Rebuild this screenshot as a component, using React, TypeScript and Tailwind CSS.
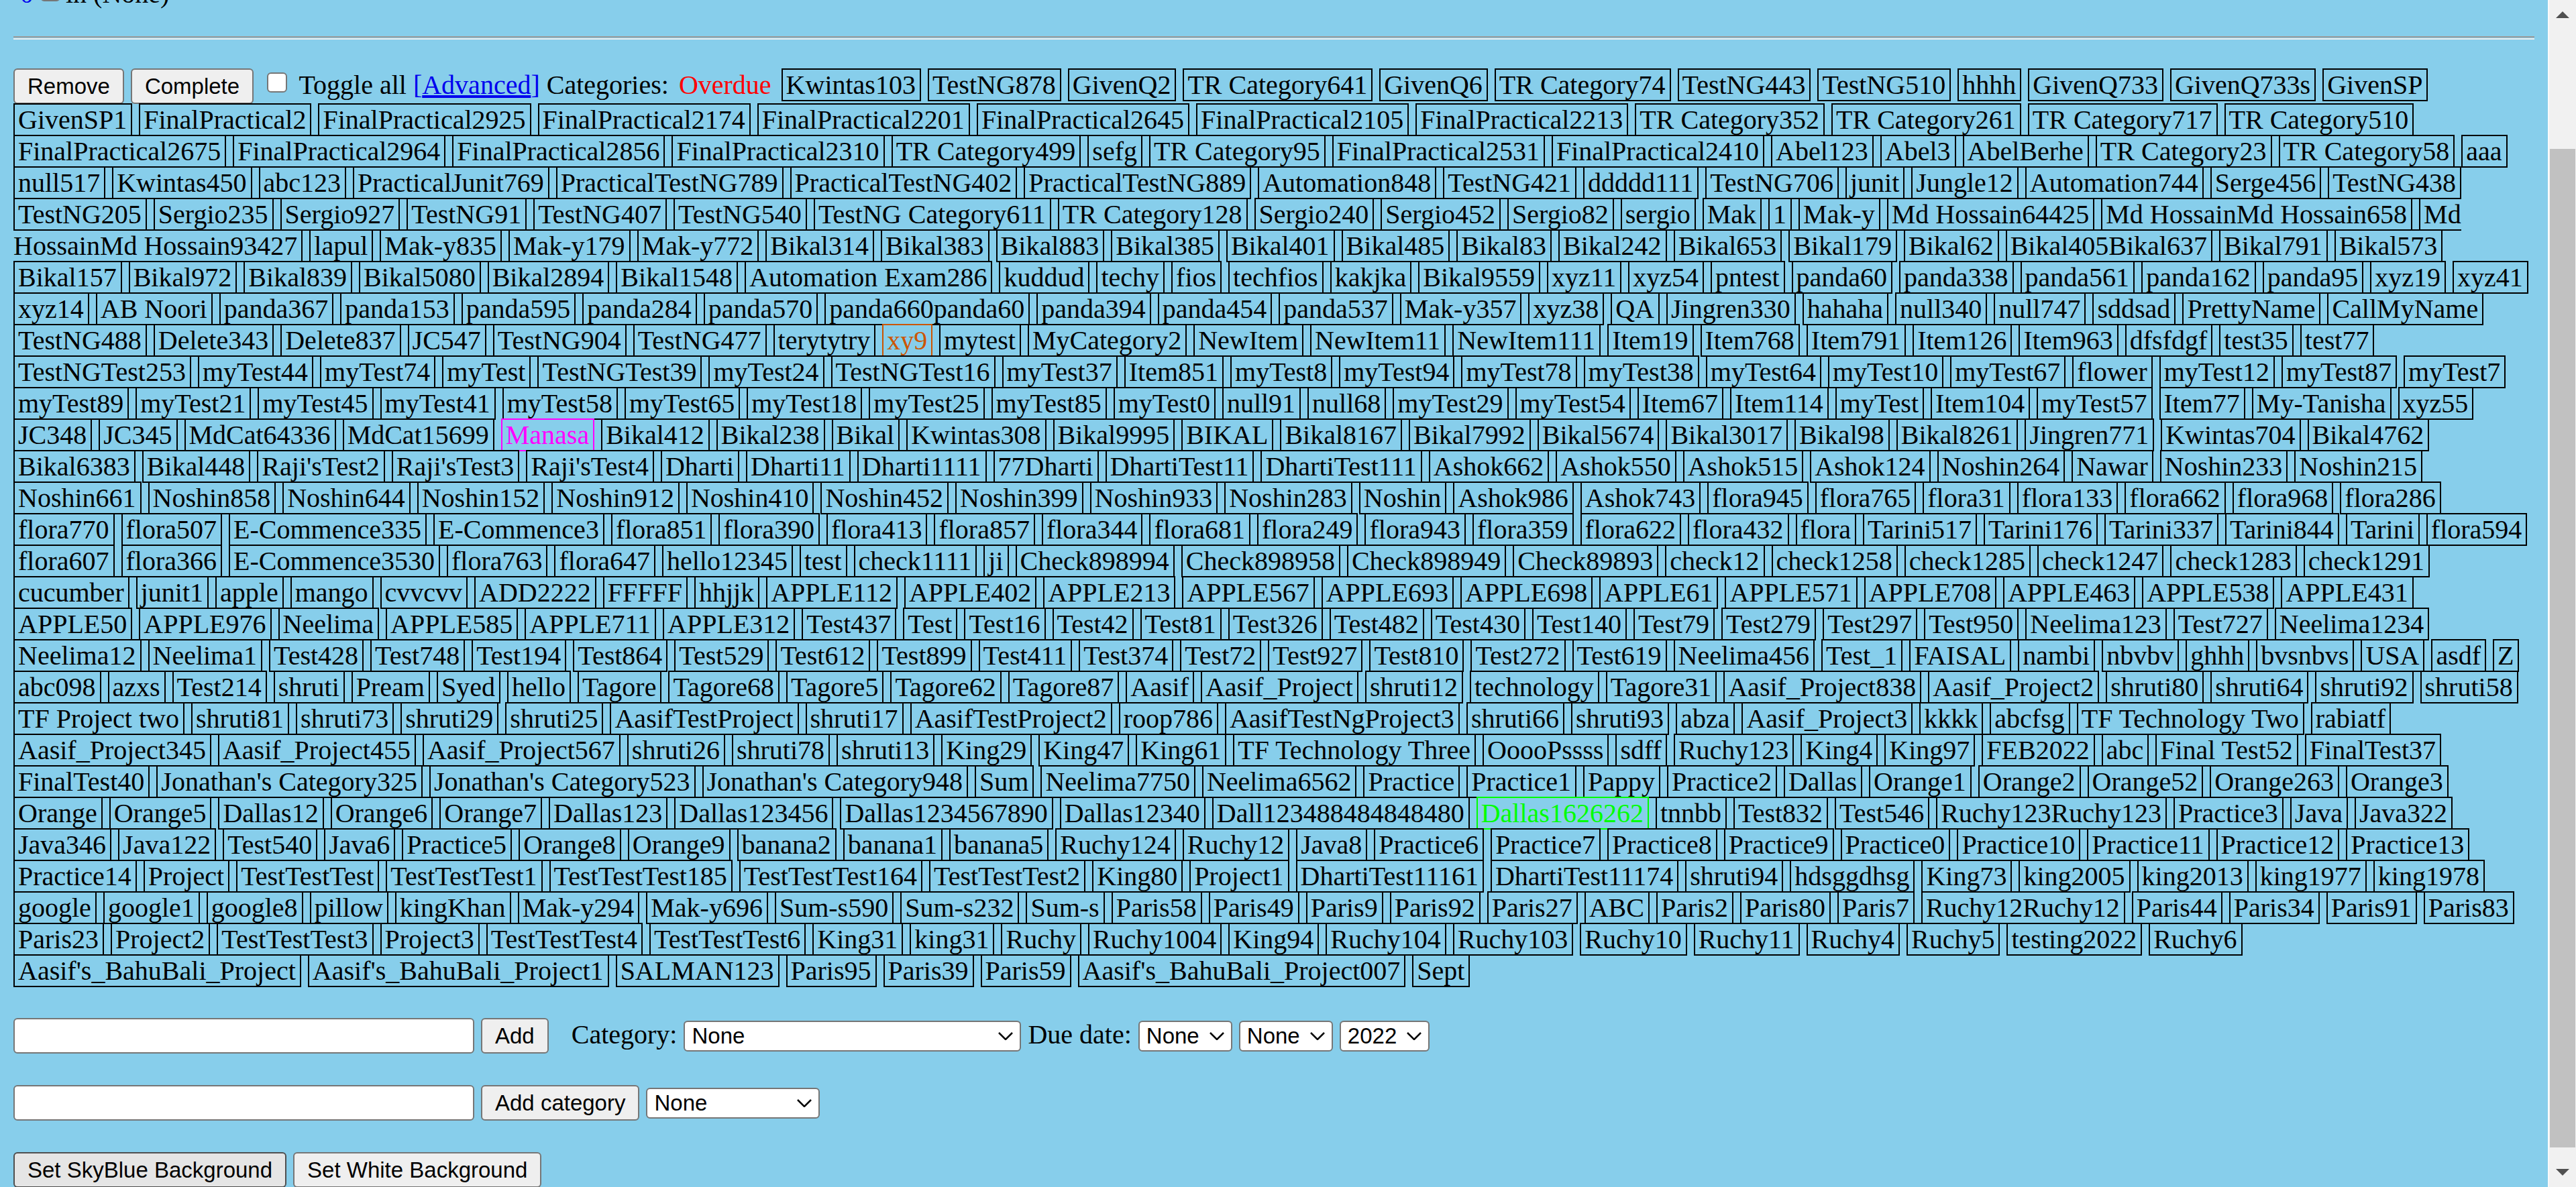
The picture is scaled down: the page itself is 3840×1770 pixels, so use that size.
import type { ReactNode } from "react";

const NAMES = `Kwintas103|TestNG878|GivenQ2|TR Category641|GivenQ6|TR Category74|TestNG443|TestNG510|hhhh|GivenQ733|GivenQ733s|GivenSP
GivenSP1|FinalPractical2|FinalPractical2925|FinalPractical2174|FinalPractical2201|FinalPractical2645|FinalPractical2105|FinalPractical2213|TR Category352|TR Category261|TR Category717|TR Category510
FinalPractical2675|FinalPractical2964|FinalPractical2856|FinalPractical2310|TR Category499|sefg|TR Category95|FinalPractical2531|FinalPractical2410|Abel123|Abel3|AbelBerhe|TR Category23|TR Category58|aaa
null517|Kwintas450|abc123|PracticalJunit769|PracticalTestNG789|PracticalTestNG402|PracticalTestNG889|Automation848|TestNG421|ddddd111|TestNG706|junit|Jungle12|Automation744|Serge456|TestNG438
TestNG205|Sergio235|Sergio927|TestNG91|TestNG407|TestNG540|TestNG Category611|TR Category128|Sergio240|Sergio452|Sergio82|sergio|Mak|1|Mak-y|Md Hossain64425|Md HossainMd Hossain658|Md HossainMd Hossain93427
lapul|Mak-y835|Mak-y179|Mak-y772|Bikal314|Bikal383|Bikal883|Bikal385|Bikal401|Bikal485|Bikal83|Bikal242|Bikal653|Bikal179|Bikal62|Bikal405Bikal637|Bikal791|Bikal573
Bikal157|Bikal972|Bikal839|Bikal5080|Bikal2894|Bikal1548|Automation Exam286|kuddud|techy|fios|techfios|kakjka|Bikal9559|xyz11|xyz54|pntest|panda60|panda338|panda561|panda162|panda95|xyz19|xyz41
xyz14|AB Noori|panda367|panda153|panda595|panda284|panda570|panda660panda60|panda394|panda454|panda537|Mak-y357|xyz38|QA|Jingren330|hahaha|null340|null747|sddsad|PrettyName|CallMyName
TestNG488|Delete343|Delete837|JC547|TestNG904|TestNG477|terytytry|xy9|mytest|MyCategory2|NewItem|NewItem11|NewItem111|Item19|Item768|Item791|Item126|Item963|dfsfdgf|test35|test77
TestNGTest253|myTest44|myTest74|myTest|TestNGTest39|myTest24|TestNGTest16|myTest37|Item851|myTest8|myTest94|myTest78|myTest38|myTest64|myTest10|myTest67|flower|myTest12|myTest87|myTest7
myTest89|myTest21|myTest45|myTest41|myTest58|myTest65|myTest18|myTest25|myTest85|myTest0|null91|null68|myTest29|myTest54|Item67|Item114|myTest|Item104|myTest57|Item77|My-Tanisha|xyz55
JC348|JC345|MdCat64336|MdCat15699|Manasa|Bikal412|Bikal238|Bikal|Kwintas308|Bikal9995|BIKAL|Bikal8167|Bikal7992|Bikal5674|Bikal3017|Bikal98|Bikal8261|Jingren771|Kwintas704|Bikal4762
Bikal6383|Bikal448|Raji'sTest2|Raji'sTest3|Raji'sTest4|Dharti|Dharti11|Dharti1111|77Dharti|DhartiTest11|DhartiTest111|Ashok662|Ashok550|Ashok515|Ashok124|Noshin264|Nawar|Noshin233|Noshin215
Noshin661|Noshin858|Noshin644|Noshin152|Noshin912|Noshin410|Noshin452|Noshin399|Noshin933|Noshin283|Noshin|Ashok986|Ashok743|flora945|flora765|flora31|flora133|flora662|flora968|flora286
flora770|flora507|E-Commence335|E-Commence3|flora851|flora390|flora413|flora857|flora344|flora681|flora249|flora943|flora359|flora622|flora432|flora|Tarini517|Tarini176|Tarini337|Tarini844|Tarini|flora594
flora607|flora366|E-Commence3530|flora763|flora647|hello12345|test|check1111|ji|Check898994|Check898958|Check898949|Check89893|check12|check1258|check1285|check1247|check1283|check1291
cucumber|junit1|apple|mango|cvvcvv|ADD2222|FFFFF|hhjjk|APPLE112|APPLE402|APPLE213|APPLE567|APPLE693|APPLE698|APPLE61|APPLE571|APPLE708|APPLE463|APPLE538|APPLE431
APPLE50|APPLE976|Neelima|APPLE585|APPLE711|APPLE312|Test437|Test|Test16|Test42|Test81|Test326|Test482|Test430|Test140|Test79|Test279|Test297|Test950|Neelima123|Test727|Neelima1234
Neelima12|Neelima1|Test428|Test748|Test194|Test864|Test529|Test612|Test899|Test411|Test374|Test72|Test927|Test810|Test272|Test619|Neelima456|Test_1|FAISAL|nambi|nbvbv|ghhh|bvsnbvs|USA|asdf|Z
abc098|azxs|Test214|shruti|Pream|Syed|hello|Tagore|Tagore68|Tagore5|Tagore62|Tagore87|Aasif|Aasif_Project|shruti12|technology|Tagore31|Aasif_Project838|Aasif_Project2|shruti80|shruti64|shruti92|shruti58
TF Project two|shruti81|shruti73|shruti29|shruti25|AasifTestProject|shruti17|AasifTestProject2|roop786|AasifTestNgProject3|shruti66|shruti93|abza|Aasif_Project3|kkkk|abcfsg|TF Technology Two|rabiatf
Aasif_Project345|Aasif_Project455|Aasif_Project567|shruti26|shruti78|shruti13|King29|King47|King61|TF Technology Three|OoooPssss|sdff|Ruchy123|King4|King97|FEB2022|abc|Final Test52|FinalTest37
FinalTest40|Jonathan's Category325|Jonathan's Category523|Jonathan's Category948|Sum|Neelima7750|Neelima6562|Practice|Practice1|Pappy|Practice2|Dallas|Orange1|Orange2|Orange52|Orange263|Orange3
Orange|Orange5|Dallas12|Orange6|Orange7|Dallas123|Dallas123456|Dallas1234567890|Dallas12340|Dall123488484848480|Dallas1626262|tnnbb|Test832|Test546|Ruchy123Ruchy123|Practice3|Java|Java322
Java346|Java122|Test540|Java6|Practice5|Orange8|Orange9|banana2|banana1|banana5|Ruchy124|Ruchy12|Java8|Practice6|Practice7|Practice8|Practice9|Practice0|Practice10|Practice11|Practice12|Practice13
Practice14|Project|TestTestTest|TestTestTest1|TestTestTest185|TestTestTest164|TestTestTest2|King80|Project1|DhartiTest11161|DhartiTest11174|shruti94|hdsggdhsg|King73|king2005|king2013|king1977|king1978
google|google1|google8|pillow|kingKhan|Mak-y294|Mak-y696|Sum-s590|Sum-s232|Sum-s|Paris58|Paris49|Paris9|Paris92|Paris27|ABC|Paris2|Paris80|Paris7|Ruchy12Ruchy12|Paris44|Paris34|Paris91|Paris83
Paris23|Project2|TestTestTest3|Project3|TestTestTest4|TestTestTest6|King31|king31|Ruchy|Ruchy1004|King94|Ruchy104|Ruchy103|Ruchy10|Ruchy11|Ruchy4|Ruchy5|testing2022|Ruchy6
Aasif's_BahuBali_Project|Aasif's_BahuBali_Project1|SALMAN123|Paris95|Paris39|Paris59|Aasif's_BahuBali_Project007|Sept`;

const CATEGORIES = NAMES.split(/[|\n]/);

const COLOURS: Record<string, string> = {
  xy9: "text-[#cc5500]",
  Manasa: "text-[#ff00ff]",
  Dallas1626262: "text-[#00ff00]",
};

function Button({ children, active = false }: { children: ReactNode; active?: boolean }) {
  return (
    <button
      type="button"
      className={`h-[53px] rounded-[6px] border-2 px-[19px] align-baseline font-['Liberation_Sans',sans-serif] text-[33px] leading-[38px] text-black ${
        active ? "border-[#4f4f4f] bg-[#e5e5e5]" : "border-[#767676] bg-[#efefef]"
      }`}
    >
      {children}
    </button>
  );
}

function Select({ label, value, width }: { label: string; value: string; width: string }) {
  return (
    <span className={`relative inline-block align-baseline ${width}`}>
      <select
        aria-label={label}
        defaultValue={value}
        className="h-[46px] w-full appearance-none rounded-[6px] border-2 border-[#767676] bg-white pl-[10px] align-baseline font-['Liberation_Sans',sans-serif] text-[33px] leading-[38px] text-black"
      >
        <option>{value}</option>
      </select>
      <svg
        viewBox="0 0 22 12"
        className="pointer-events-none absolute right-[12px] top-[20px] h-[12px] w-[22px]"
        fill="none"
        stroke="black"
        strokeWidth="2.5"
      >
        <path d="M1 1 11 11 21 1" />
      </svg>
    </span>
  );
}

function TextBox({ label }: { label: string }) {
  return (
    <input
      type="text"
      aria-label={label}
      className="h-[53px] w-[687px] rounded-[6px] border-2 border-[#767676] bg-white px-[5px] align-baseline font-['Liberation_Sans',sans-serif] text-[33px] leading-[38px]"
    />
  );
}

function Checkbox({ id, label }: { id: string; label?: string }) {
  return (
    <input
      type="checkbox"
      id={id}
      aria-label={label}
      className="mr-[8px] mb-[2px] ml-[10px] inline-block size-[30px] appearance-none rounded-[6px] border-2 border-[#767676] bg-white align-baseline"
    />
  );
}

export default function App() {
  return (
    <div className="flex h-screen overflow-hidden bg-[#87ceeb] font-['Liberation_Serif',serif] text-[40px] leading-[47px] text-black">
      <main className="min-w-0 flex-1 px-[20px]">
        <div className="-mt-[33px] ml-[10px] h-[47px] whitespace-nowrap">
          <a href="#item" className="text-[#0000ee]">0</a>
          <Checkbox id="item" />
          <label htmlFor="item">in (None)</label>
        </div>
        <hr className="mt-[40px] h-[5px] border-t-2 border-b-2 border-t-[#9a9a9a] border-b-[#eeeeee]" />
        <div className="mt-[43px]">
          <Button>Remove</Button> <Button>Complete</Button> <Checkbox id="toggle-all" />{" "}
          <label htmlFor="toggle-all">Toggle all</label>{" "}
          <span className="text-[#0000ee]">
            [<a href="#advanced" className="underline decoration-4 underline-offset-2">Advanced</a>]
          </span>{" "}
          Categories: <span className="px-[5px] text-[#ff0000]">Overdue</span>{" "}
          {CATEGORIES.map((name, i) => (
            <span key={i}>
              <span className={`border-2 border-current pr-[6px] pl-[5px] ${COLOURS[name] ?? "text-black"}`}>{name}</span>{" "}
            </span>
          ))}
        </div>
        <form className="mt-[47px] whitespace-nowrap">
          <TextBox label="New item" /> <Button>Add</Button>
          <span className="ml-[34px]">Category:</span> <Select label="Category" value="None" width="w-[503px]" />{" "}
          Due date: <Select label="Day" value="None" width="w-[140px]" />{" "}
          <Select label="Month" value="None" width="w-[140px]" />{" "}
          <Select label="Year" value="2022" width="w-[134px]" />
        </form>
        <form className="mt-[47px] whitespace-nowrap">
          <TextBox label="New category" /> <Button>Add category</Button>{" "}
          <Select label="Category colour" value="None" width="w-[259px]" />
        </form>
        <div className="mt-[47px] whitespace-nowrap">
          <Button active>Set SkyBlue Background</Button> <Button>Set White Background</Button>
        </div>
      </main>
      <div aria-hidden="true" className="flex w-[42px] flex-col items-center border-l-2 border-[#fafafa] bg-[#f1f1f1] py-[17px]">
        <svg viewBox="0 0 20 10" className="h-[10px] w-[20px] shrink-0" fill="#505050">
          <path d="M10 0 20 10H0Z" />
        </svg>
        <div className="mt-[195px] mb-[32px] w-[38px] flex-1 bg-[#c1c1c1]" />
        <svg viewBox="0 0 20 10" className="h-[10px] w-[20px] shrink-0" fill="#505050">
          <path d="M0 0H20L10 10Z" />
        </svg>
      </div>
    </div>
  );
}
